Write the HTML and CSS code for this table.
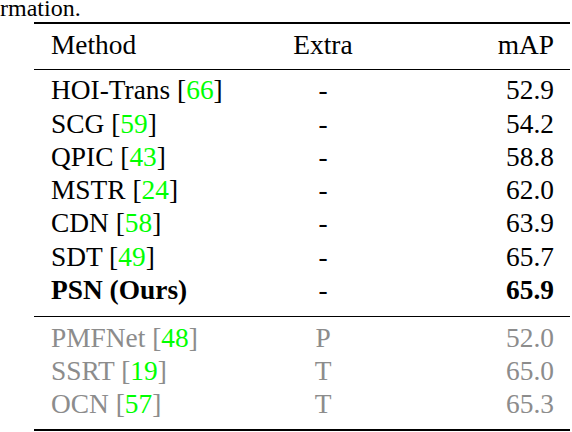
FILE: index.html
```html
<!DOCTYPE html>
<html>
<head>
<meta charset="utf-8">
<link rel="stylesheet" href="styles.css">
</head>
<body>
<div class="caption">rmation.</div>
<div class="tbl">
  <div class="group head">
    <div class="row"><span class="c1">Method</span><span class="c2">Extra</span><span class="c3">mAP</span></div>
  </div>
  <div class="group main">
    <div class="row"><span class="c1">HOI-Trans [<span class="ref">66</span>]</span><span class="c2">-</span><span class="c3">52.9</span></div>
    <div class="row"><span class="c1">SCG [<span class="ref">59</span>]</span><span class="c2">-</span><span class="c3">54.2</span></div>
    <div class="row"><span class="c1">QPIC [<span class="ref">43</span>]</span><span class="c2">-</span><span class="c3">58.8</span></div>
    <div class="row"><span class="c1">MSTR [<span class="ref">24</span>]</span><span class="c2">-</span><span class="c3">62.0</span></div>
    <div class="row"><span class="c1">CDN [<span class="ref">58</span>]</span><span class="c2">-</span><span class="c3">63.9</span></div>
    <div class="row"><span class="c1">SDT [<span class="ref">49</span>]</span><span class="c2">-</span><span class="c3">65.7</span></div>
    <div class="row"><span class="c1 bold">PSN (Ours)</span><span class="c2">-</span><span class="c3 bold">65.9</span></div>
  </div>
  <div class="group extra">
    <div class="row"><span class="c1">PMFNet [<span class="ref">48</span>]</span><span class="c2">P</span><span class="c3">52.0</span></div>
    <div class="row"><span class="c1">SSRT [<span class="ref">19</span>]</span><span class="c2">T</span><span class="c3">65.0</span></div>
    <div class="row"><span class="c1">OCN [<span class="ref">57</span>]</span><span class="c2">T</span><span class="c3">65.3</span></div>
  </div>
</div>
</body>
</html>
```

FILE: styles.css
```css
html, body {
  margin: 0;
  padding: 0;
  background: #ffffff;
}
body {
  font-family: "Liberation Serif", "Times New Roman", Tinos, Times, "DejaVu Serif", serif;
  color: #000;
  width: 572px;
  height: 432px;
  overflow: hidden;
}
.caption {
  font-size: 24px;
  line-height: 24px;
  margin-top: -4px;
  height: 23px;
  white-space: nowrap;
}
.tbl {
  margin-top: 3px;
  margin-left: 34px;
  width: 536px;
  border-top: 2px solid #000;
  border-bottom: 2px solid #000;
  font-size: 27.4px;
  line-height: 33.3px;
}
.group {
  padding: 0 16px 0 17px;
}
.head {
  padding-top: 4.5px;
  padding-bottom: 7px;
  border-bottom: 1.5px solid #000;
}
.main {
  padding-top: 4.5px;
  padding-bottom: 8.2px;
  border-bottom: 1.5px solid #000;
}
.extra {
  padding-top: 5.5px;
  padding-bottom: 7.9px;
  color: #8c8c8c;
}
.extra .row {
  height: 33px;
}
.row {
  display: grid;
  grid-template-columns: 218px 108px 1fr;
  height: 33.3px;
  white-space: nowrap;
}
.c2 {
  text-align: center;
}
.c3 {
  text-align: right;
}
.bold {
  font-weight: bold;
}
.ref {
  color: #00ff00;
}
```
